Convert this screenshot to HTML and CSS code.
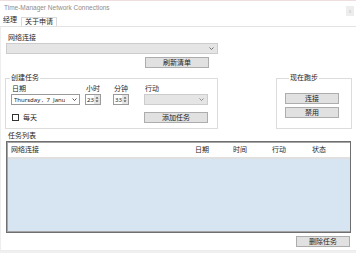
FILE: index.html
```html
<!DOCTYPE html>
<html lang="zh">
<head>
    <meta charset="UTF-8">
    <title>Time-Manager Network Connections</title>
    <link rel="stylesheet" href="styles.css">
</head>
<body>
    <div class="window">
        <!-- Заголовок окна -->
        <div class="titlebar">
            <span class="title">Time-Manager Network Connections</span>
            <span class="close">x</span>
        </div>

        <!-- Вкладки -->
        <div class="tabs">
            <span class="tab tab-active">经理</span>
            <span class="tab">关于申请</span>
        </div>

        <div class="panel">
            <div class="label">网络连接</div>
            <div class="combo combo-wide">
                <svg class="chevron" width="5" height="3" viewBox="0 0 5 3"><path d="M0.5 0.5 L2.5 2.5 L4.5 0.5" fill="none" stroke="#555" stroke-width="0.8"/></svg>
            </div>
            <div class="btn btn-refresh">刷新清单</div>

            <div class="groups">
                <!-- Создать задачу -->
                <div class="group group-task">
                    <div class="group-title">创建任务</div>
                    <div class="task-grid">
                        <div class="field-label">日期</div>
                        <div class="field-label">小时</div>
                        <div class="field-label">分钟</div>
                        <div class="field-label">行动</div>

                        <div class="datepicker">
                            <span class="date-text">Thursday ,&nbsp; 7 &nbsp;Janu</span>
                            <svg width="5" height="3" viewBox="0 0 5 3"><path d="M0.5 0.5 L2.5 2.5 L4.5 0.5" fill="none" stroke="#333" stroke-width="0.8"/></svg>
                        </div>
                        <div class="spinner">
                            <span class="spin-value">23</span>
                            <svg class="spin" width="6" height="9" viewBox="0 0 6 9"><path d="M1.5 3.5 L3 2 L4.5 3.5 Z M1.5 5.5 L3 7 L4.5 5.5 Z" fill="#333"/></svg>
                        </div>
                        <div class="spinner">
                            <span class="spin-value">33</span>
                            <svg class="spin" width="6" height="9" viewBox="0 0 6 9"><path d="M1.5 3.5 L3 2 L4.5 3.5 Z M1.5 5.5 L3 7 L4.5 5.5 Z" fill="#333"/></svg>
                        </div>
                        <div class="combo">
                            <svg class="chevron" width="5" height="3" viewBox="0 0 5 3"><path d="M0.5 0.5 L2.5 2.5 L4.5 0.5" fill="none" stroke="#777" stroke-width="0.8"/></svg>
                        </div>

                        <label class="check">
                            <span class="check-box"></span>
                            每天
                        </label>
                        <div class="btn btn-add">添加任务</div>
                    </div>
                </div>

                <!-- Сейчас запущено -->
                <div class="group group-run">
                    <div class="group-title">现在跑步</div>
                    <div class="btn btn-run btn-connect">连接</div>
                    <div class="btn btn-run">禁用</div>
                </div>
            </div>

            <div class="label label-list">任务列表</div>
            <div class="listview">
                <div class="list-header">
                    <span class="col">网络连接</span>
                    <span class="col">日期</span>
                    <span class="col">时间</span>
                    <span class="col">行动</span>
                    <span class="col">状态</span>
                </div>
                <div class="list-body"></div>
            </div>
            <div class="btn btn-delete">删除任务</div>
        </div>

        <div class="statusbar"></div>
    </div>
</body>
</html>
```

FILE: styles.css
```css
* {
    margin: 0;
    padding: 0;
    box-sizing: border-box;
}

body {
    font-family: "Noto Sans", "Noto Sans CJK SC", sans-serif;
    font-size: 7px;
    line-height: 8px;
    color: #1e1e1e;
    background: #ffffff;
    width: 356px;
    height: 253px;
    overflow: hidden;
}

.window {
    display: flex;
    flex-direction: column;
    height: 253px;
    border-top: 1px solid #eedede;
}

/* Заголовок */
.titlebar {
    height: 13px;
    display: flex;
    align-items: center;
    justify-content: space-between;
    padding: 0 2px 0 4px;
}

.title {
    font-family: "Liberation Sans", sans-serif;
    font-size: 6.5px;
    color: #8c8c8c;
}

.close {
    width: 8px;
    height: 10px;
    margin-top: 6px;
    background: #ededed;
    color: #c4c4c4;
    font-family: "Liberation Sans", sans-serif;
    font-size: 5px;
    line-height: 10px;
    text-align: center;
}

/* Вкладки */
.tabs {
    height: 12px;
    display: flex;
    align-items: flex-end;
    padding-left: 3px;
    gap: 3px;
}

.tab {
    height: 9px;
    padding: 0 3px;
    border: 1px solid #d9d9d9;
    border-bottom: none;
    line-height: 8px;
}

.tab-active {
    height: 11px;
    padding: 0 1px 0 0;
    border: none;
    line-height: 9px;
}

/* Панель */
.panel {
    flex: 1;
    border-top: 1px solid #e3e3e3;
    border-left: 1px solid #eeeeee;
    border-bottom: 1px solid #ececec;
}

.label {
    margin-top: 7px;
    height: 8px;
    padding-left: 7px;
}

.label-list {
    margin-top: 3px;
}

.combo {
    height: 11px;
    background: #e5e5e5;
    border: 1px solid #cccccc;
    display: flex;
    align-items: center;
    justify-content: flex-end;
    padding-right: 3px;
}

.combo-wide {
    margin-top: 1px;
    margin-left: 5px;
    width: 212px;
}

.btn {
    height: 11px;
    background: #e1e1e1;
    border: 1px solid #adadad;
    text-align: center;
    line-height: 9px;
}

.btn-refresh {
    margin-top: 3px;
    margin-left: 144px;
    width: 64px;
}

/* Группы */
.groups {
    display: flex;
    margin-top: 10px;
    margin-left: 4px;
    gap: 58px;
}

.group {
    height: 51px;
    border: 1px solid #dcdcdc;
}

.group-title {
    width: max-content;
    margin-top: -5px;
    margin-left: 4px;
    padding: 0 1px;
    background: #ffffff;
    height: 8px;
}

.group-task {
    width: 213px;
    padding: 0 5px;
}

.group-task .group-title {
    margin-left: -1px;
}

.task-grid {
    display: grid;
    grid-template-columns: 74px 28px 31px 64px;
    grid-template-rows: 8px 11px 5px 11px;
    row-gap: 1px;
    margin-top: 3px;
}

.field-label {
    padding-left: 1px;
}

.datepicker {
    width: 69px;
    background: #ffffff;
    border: 1px solid #9a9a9a;
    display: flex;
    align-items: center;
    justify-content: space-between;
    padding: 0 2px;
    overflow: hidden;
}

.date-text {
    font-size: 6px;
    white-space: nowrap;
    overflow: hidden;
}

.spinner {
    width: 16px;
    background: #ffffff;
    border: 1px solid #9a9a9a;
    display: flex;
    align-items: center;
}

.spin-value {
    flex: 1;
    padding-left: 1px;
    font-size: 6px;
}

.spin {
    background: #e4e4e4;
}

.check {
    grid-row: 4;
    grid-column: 1;
    display: flex;
    align-items: center;
    gap: 4px;
    padding-left: 1px;
}

.check-box {
    width: 7px;
    height: 7px;
    border: 1px solid #333333;
    background: #ffffff;
}

.btn-add {
    grid-row: 4;
    grid-column: 4;
}

.group-run {
    width: 76px;
    padding-left: 8px;
}

.btn-run {
    width: 54px;
    margin-top: 3px;
}

.btn-connect {
    margin-top: 11px;
}

/* Список задач */
.listview {
    margin-top: 1px;
    margin-left: 5px;
    width: 345px;
    height: 92px;
    border: 1px solid #6f6f6f;
    box-shadow: inset 1px 1px 0 #a5a5a5, inset 0 -1px 0 #a5a5a5;
    display: flex;
    flex-direction: column;
    padding: 1px 0 1px 1px;
}

.list-header {
    height: 16px;
    display: grid;
    grid-template-columns: 184px 38px 39px 40px 1fr;
    align-items: center;
    background: #ffffff;
    border-bottom: 2px solid #e0e0e0;
}

.col {
    padding-left: 3px;
}

.list-body {
    flex: 1;
    background: #d7e4f2;
}

.btn-delete {
    margin-top: 3px;
    margin-left: 295px;
    width: 54px;
}

.statusbar {
    height: 2px;
    background: #f0f0f0;
}
```
